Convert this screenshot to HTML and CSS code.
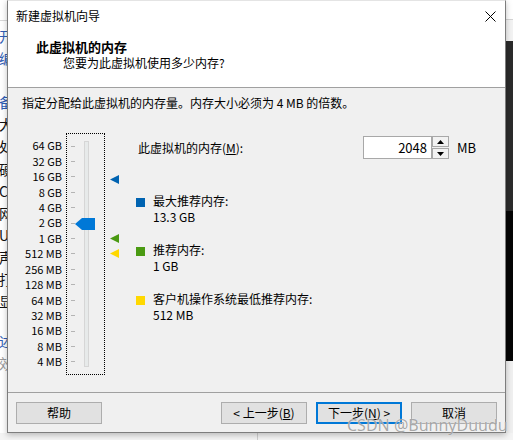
FILE: index.html
```html
<!DOCTYPE html>
<html lang="zh-CN">
<head>
<meta charset="utf-8">
<title>新建虚拟机向导</title>
<link rel="stylesheet" href="styles.css">
</head>
<body>
<div class="desk">
  <div class="bg-left">
    <span class="bl blue">开</span>
    <span class="bl blue">编</span>
    <span class="bl"></span>
    <span class="bl blue">备</span>
    <span class="bl">大</span>
    <span class="bl">处</span>
    <span class="bl">硬</span>
    <span class="bl">C</span>
    <span class="bl">网</span>
    <span class="bl">U</span>
    <span class="bl">声</span>
    <span class="bl">打</span>
    <span class="bl">显</span>
    <span class="bl short"></span>
    <span class="bl blue">述</span>
    <span class="bl gray">效</span>
  </div>
  <div class="bg-right">
    <div class="br-white"></div>
    <div class="br-light"></div>
    <div class="br-dark"></div>
    <div class="br-black"></div>
    <div class="br-pale"></div>
  </div>
  <div class="bg-bottom"><div class="bb-line"></div></div>

  <div class="dialog">
    <div class="titlebar">
      <span class="title">新建虚拟机向导</span>
      <svg class="close" width="11" height="11" viewBox="0 0 11 11"><path d="M0.5 0.5 L10.5 10.5 M10.5 0.5 L0.5 10.5" stroke="#000" stroke-width="1" fill="none"/></svg>
    </div>
    <div class="header">
      <div class="h-title">此虚拟机的内存</div>
      <div class="h-sub">您要为此虚拟机使用多少内存?</div>
    </div>
    <div class="content">
      <p class="intro">指定分配给此虚拟机的内存量。内存大小必须为 4 MB 的倍数。</p>
      <div class="main">
        <div class="scale">
          <span>64 GB</span><span>32 GB</span><span>16 GB</span><span>8 GB</span><span>4 GB</span>
          <span>2 GB</span><span>1 GB</span><span>512 MB</span><span>256 MB</span><span>128 MB</span>
          <span>64 MB</span><span>32 MB</span><span>16 MB</span><span>8 MB</span><span>4 MB</span>
        </div>
        <div class="slider">
          <div class="ticks">
            <i></i><i></i><i></i><i></i><i></i><i></i><i></i><i></i><i></i><i></i><i></i><i></i><i></i><i></i><i></i>
          </div>
          <div class="track"></div>
          <svg class="thumb" width="20" height="12" viewBox="0 0 20 12"><polygon points="0,6 7,0 20,0 20,12 7,12" fill="#0078d7"/></svg>
        </div>
        <div class="markers">
          <svg class="marker" style="top:42px" width="9" height="9" viewBox="0 0 9 9"><polygon points="9,0 0,4.5 9,9" fill="#0063b1"/></svg>
          <svg class="marker" style="top:101px" width="9" height="9" viewBox="0 0 9 9"><polygon points="9,0 0,4.5 9,9" fill="#4a9a12"/></svg>
          <svg class="marker" style="top:116px" width="9" height="9" viewBox="0 0 9 9"><polygon points="9,0 0,4.5 9,9" fill="#ffd800"/></svg>
        </div>
        <div class="info">
          <div class="mem-row">
            <label class="mem-label">此虚拟机的内存(<u>M</u>):</label>
            <div class="spin">
              <div class="spin-input">2048</div>
              <div class="spin-btns">
                <span class="sb"><svg width="7" height="4" viewBox="0 0 7 4"><polygon points="0,4 3.5,0 7,4" fill="#000"/></svg></span>
                <span class="sb"><svg width="7" height="4" viewBox="0 0 7 4"><polygon points="0,0 3.5,4 7,0" fill="#000"/></svg></span>
              </div>
            </div>
            <span class="unit">MB</span>
          </div>
          <div class="legend">
            <div class="lg">
              <span class="sq blue"></span>
              <div class="lg-text"><div>最大推荐内存:</div><div>13.3 GB</div></div>
            </div>
            <div class="lg">
              <span class="sq green"></span>
              <div class="lg-text"><div>推荐内存:</div><div>1 GB</div></div>
            </div>
            <div class="lg">
              <span class="sq yellow"></span>
              <div class="lg-text"><div>客户机操作系统最低推荐内存:</div><div>512 MB</div></div>
            </div>
          </div>
        </div>
      </div>
    </div>
    <div class="footer">
      <button class="btn">帮助</button>
      <div class="nav">
        <button class="btn">&lt; 上一步(<u>B</u>)</button>
        <button class="btn focus">下一步(<u>N</u>) &gt;</button>
        <button class="btn">取消</button>
      </div>
    </div>
  </div>
  <div class="watermark">CSDN @BunnyDuudu</div>
</div>
</body>
</html>
```

FILE: styles.css
```css
* { box-sizing: border-box; }
html, body { margin: 0; padding: 0; }
body {
  font-family: "Noto Sans CJK SC", "Noto Sans", sans-serif;
  font-size: 12px;
  color: #000;
  background: #fff;
}
.desk {
  position: relative;
  width: 513px;
  height: 440px;
  overflow: hidden;
  background: #fff;
}

/* background application, left strip */
.bg-left {
  position: absolute;
  left: 0;
  top: 0;
  width: 20px;
  height: 440px;
  padding-top: 25px;
  display: flex;
  flex-direction: column;
  border-top: 0;
  background: linear-gradient(#fff 0 20px, #d8d8d8 20px 21px, #fff 21px);
}
.bl {
  display: block;
  height: 22.1px;
  line-height: 22px;
  font-size: 14px;
  color: #111;
  margin-left: -1px;
}
.bl.short { height: 18px; }
.bl.blue { color: #2f5db4; }
.bl.gray { color: #999; }

/* background application, right strip */
.bg-right {
  position: absolute;
  right: 0;
  top: 0;
  width: 20px;
  height: 440px;
  display: flex;
  flex-direction: column;
}
.br-white { height: 20px; background: #fff; border-bottom: 1px solid #d4d4d4; }
.br-light { height: 21px; background: #f3f3f3; }
.br-dark { height: 170px; background: #2b2b2b; }
.br-black { height: 150px; background: #050505; }
.br-pale { flex: 1; background: #f0f0f0; }

.bg-bottom {
  position: absolute;
  left: 0;
  top: 433px;
  width: 513px;
  height: 7px;
  background: #f4f4f4;
}
.bb-line {
  margin-left: 257px;
  width: 1px;
  height: 7px;
  background: #cfcfcf;
}

/* dialog window */
.dialog {
  position: absolute;
  left: 7px;
  top: 0;
  width: 499px;
  height: 433px;
  display: flex;
  flex-direction: column;
  background: #f0f0f0;
  border: 1px solid #7d7d7d;
  border-top-color: #e4e4e4;
  box-shadow: 0 2px 6px rgba(0, 0, 0, 0.25);
}
.titlebar {
  height: 29px;
  display: flex;
  align-items: center;
  justify-content: space-between;
  padding-left: 8px;
  padding-right: 9px;
  background: #fff;
  line-height: 16px;
}
.close { display: block; margin-top: 1px; }
.header {
  height: 58px;
  padding-top: 9px;
  background: #fff;
  border-bottom: 1px solid #a0a0a0;
  line-height: 16px;
}
.h-title {
  padding-left: 28px;
  font-weight: bold;
  font-size: 13px;
}
.h-sub { padding-left: 55px; }

.content {
  flex: 1;
  padding-top: 7px;
}
.intro {
  margin: 0;
  padding-left: 14px;
  line-height: 16px;
}
.main {
  display: flex;
  align-items: flex-start;
  margin-top: 22px;
}
.scale {
  width: 54px;
  padding-top: 5.3px;
  display: grid;
  grid-template-rows: repeat(15, 15.43px);
  text-align: right;
  font-size: 11px;
  line-height: 15.43px;
  color: #000;
}
.slider {
  position: relative;
  width: 39px;
  height: 242px;
  margin-left: 4px;
  border: 1px dotted #000;
  display: flex;
  align-items: flex-start;
}
.ticks {
  width: 4px;
  margin-left: 4px;
  padding-top: 4.3px;
  display: grid;
  grid-template-rows: repeat(15, 15.43px);
  align-items: center;
}
.ticks i {
  display: block;
  width: 4px;
  height: 1px;
  background: #b4b4b4;
}
.track {
  width: 5px;
  height: 226px;
  margin-left: 9px;
  margin-top: 7px;
  background: #e7eaea;
  border: 1px solid #d6d6d6;
}
.thumb {
  position: absolute;
  left: 8px;
  top: 84px;
}
.markers {
  position: relative;
  width: 9px;
  height: 240px;
  margin-left: 5px;
}
.marker { position: absolute; left: 0; }

.info {
  flex: 1;
  margin-left: 17px;
}
.mem-row {
  display: flex;
  align-items: center;
  height: 23px;
  margin-top: 3px;
}
.mem-label {
  flex: 0 0 227px;
  padding-left: 2px;
  line-height: 23px;
}
.spin {
  display: flex;
  height: 23px;
}
.spin-input {
  width: 69px;
  height: 23px;
  padding-right: 4px;
  background: #fff;
  border: 1px solid #a8a8a8;
  text-align: right;
  line-height: 21px;
  font-size: 13px;
}
.spin-btns {
  width: 17px;
  display: flex;
  flex-direction: column;
  gap: 1px;
}
.sb {
  flex: 1;
  display: flex;
  align-items: center;
  justify-content: center;
  background: #f2f2f2;
  border: 1px solid #a8a8a8;
}
.sb svg { display: block; }
.unit {
  margin-left: 8px;
  font-size: 13px;
}
.legend {
  margin-top: 34px;
  display: flex;
  flex-direction: column;
  gap: 17px;
}
.lg {
  display: flex;
  align-items: flex-start;
}
.sq {
  flex: 0 0 9px;
  height: 9px;
  margin-top: 5px;
}
.sq.blue { background: #0063b1; }
.sq.green { background: #4a9a12; }
.sq.yellow { background: #ffd800; }
.lg-text {
  margin-left: 8px;
  line-height: 16px;
  font-size: 12px;
}

.footer {
  height: 40px;
  border-top: 1px solid #a0a0a0;
  display: flex;
  align-items: flex-start;
  justify-content: space-between;
  padding: 9px 8px 0 8px;
}
.nav {
  display: flex;
  gap: 9px;
}
.btn {
  width: 86px;
  height: 22px;
  padding: 0;
  margin: 0;
  font-family: inherit;
  font-size: 12px;
  line-height: 18px;
  color: #000;
  background: #e1e1e1;
  border: 1px solid #adadad;
  border-radius: 0;
  text-align: center;
}
.btn.focus {
  border: 2px solid #0078d7;
  line-height: 16px;
}

.watermark {
  position: absolute;
  left: 347px;
  top: 415px;
  font-family: "Noto Sans", "Liberation Sans", sans-serif;
  font-size: 16px;
  line-height: 20px;
  color: rgba(140, 140, 140, 0.75);
  text-shadow: 0 0 1px rgba(255, 255, 255, 0.9);
  white-space: nowrap;
}
```
